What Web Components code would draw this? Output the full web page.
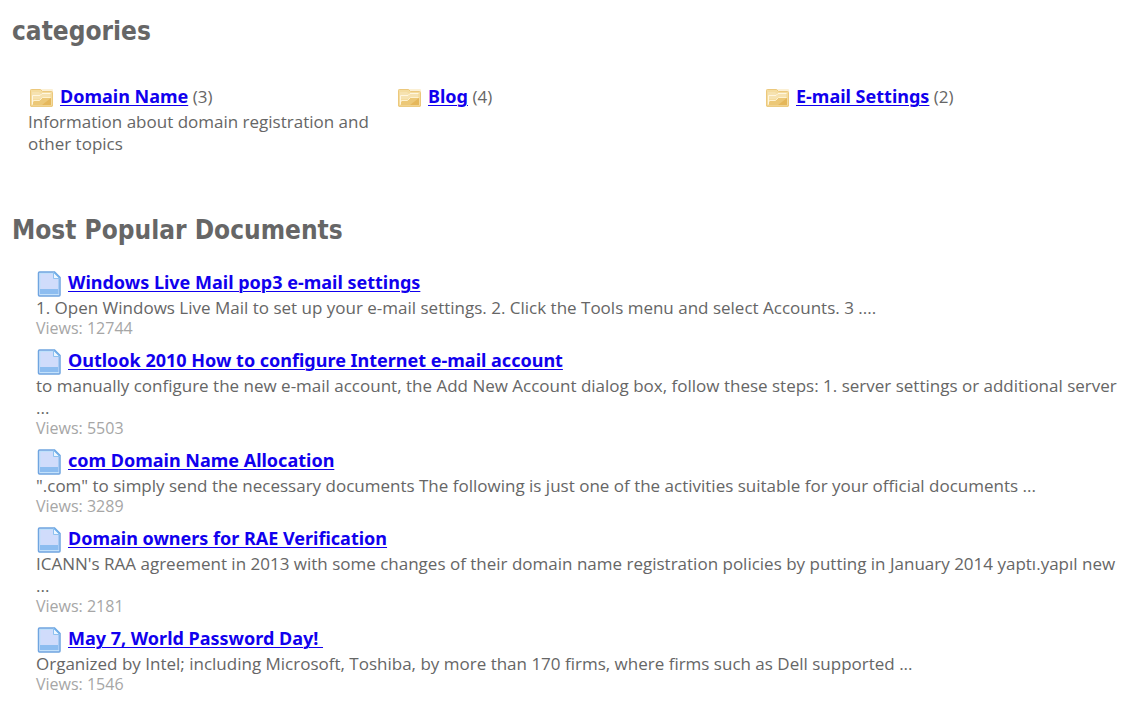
<!DOCTYPE html>
<html lang="en">
<head>
<meta charset="utf-8">
<title>Knowledge base</title>
<style>
body { margin: 0; background: #fff; }
</style>
</head>
<body>
<kb-page>
  <kb-section heading="categories">
    <kb-categories>
      <kb-category label="Domain Name" count="3">Information about domain registration and other topics</kb-category>
      <kb-category label="Blog" count="4"></kb-category>
      <kb-category label="E-mail Settings" count="2"></kb-category>
    </kb-categories>
  </kb-section>
  <kb-section heading="Most Popular Documents">
    <kb-documents>
      <kb-document label="Windows Live Mail pop3 e-mail settings" views="12744">1. Open Windows Live Mail to set up your e-mail settings. 2. Click the Tools menu and select Accounts. 3 ....</kb-document>
      <kb-document label="Outlook 2010 How to configure Internet e-mail account" views="5503">to manually configure the new e-mail account, the Add New Account dialog box, follow these steps: 1. server settings or additional server ...</kb-document>
      <kb-document label="com Domain Name Allocation" views="3289">".com" to simply send the necessary documents The following is just one of the activities suitable for your official documents ...</kb-document>
      <kb-document label="Domain owners for RAE Verification" views="2181">ICANN's RAA agreement in 2013 with some changes of their domain name registration policies by putting in January 2014 yaptı.yapıl new ...</kb-document>
      <kb-document label="May 7, World Password Day!&nbsp;" views="1546">Organized by Intel; including Microsoft, Toshiba, by more than 170 firms, where firms such as Dell supported ...</kb-document>
    </kb-documents>
  </kb-section>
</kb-page>
<script>
class KbElement extends HTMLElement {
  connectedCallback() {
    if (this.shadowRoot) return;
    this.attachShadow({ mode: 'open' }).innerHTML = this.markup();
    this.shadowRoot.querySelectorAll('[data-attr]').forEach(el => {
      el.textContent = this.getAttribute(el.dataset.attr);
    });
  }
}

customElements.define('kb-page', class extends KbElement {
  markup() {
    return `<style>
      :host { display: block; font: 17px/22px Tahoma, "Open Sans", sans-serif; color: #666; }
      main { display: flex; flex-direction: column; gap: 60px; padding: 16px 18px 12px 12px; }
    </style><main><slot></slot></main>`;
  }
});

customElements.define('kb-section', class extends KbElement {
  markup() {
    return `<style>
      :host { display: block; }
      h2 { margin: 0 0 24px; font: 700 26px/30px Tahoma, "DejaVu Sans Condensed", sans-serif; }
    </style><section><h2 data-attr="heading"></h2><slot></slot></section>`;
  }
});

customElements.define('kb-categories', class extends KbElement {
  markup() {
    return `<style>
      :host { display: grid; grid-template-columns: repeat(3, 1fr); padding-top: 15px; }
    </style><slot></slot>`;
  }
});

customElements.define('kb-documents', class extends KbElement {
  markup() {
    return `<style>
      :host { display: flex; flex-direction: column; gap: 12px; padding: 2px 0 0 24px; margin-right: -6px; }
    </style><slot></slot>`;
  }
});

const entryStyles = `
  .title { display: flex; align-items: flex-start; height: 26px; white-space: pre; }
  a { color: #10e; font: 700 18px/22px Tahoma, "Noto Sans", sans-serif; text-decoration: underline; text-decoration-thickness: 1px; text-underline-offset: 2px; }
  svg { flex: none; }
  p { margin: 0; }`;

customElements.define('kb-category', class extends KbElement {
  markup() {
    return `<style>${entryStyles}
      :host { display: block; padding: 0 8px 0 16px; }
      svg { margin: 3px 6px 0 1px; }
    </style>
    <div class="title"><svg width="25" height="20" viewBox="0 0 25 20" aria-hidden="true">
      <rect x="1" y="1" width="23" height="18" rx="1" fill="#fbf0d5"/>
      <path d="M1.5 18V2.5q0-1 1-1h9l2 2h9q1 0 1 1V18z" fill="#f4dc9f" stroke="#ecc87c"/>
      <path d="M3 4h7l2 2h9v3h-7l-2 2H3z" fill="#f6e2b0"/>
      <path d="M3.5 16.500V7.500h7.500l2-2h8.500" fill="none" stroke="#fff6df"/>
      <path d="M4 17v-4h6l3-3h9v7z" fill="#ecc877"/>
      <path d="M13 17l9-7v7z" fill="#e5b75a"/>
      <path d="M4.500 13.500V12.500h6l3-3h8" fill="none" stroke="#fff2cf"/>
      <path d="M2 18.500h21" stroke="#eccb80"/>
    </svg><div><a href="#" data-attr="label"></a> (<span data-attr="count"></span>)</div></div>
    <p><slot></slot></p>`;
  }
});

customElements.define('kb-document', class extends KbElement {
  markup() {
    return `<style>${entryStyles}
      :host { display: block; }
      svg { margin: 0 6px 0 1px; }
      .views { font-size: 16px; line-height: 18px; color: #a6a6a6; }
    </style>
    <div class="title"><svg width="25" height="26" viewBox="0 0 25 26" aria-hidden="true">
      <path d="M2.500 1h15L23 6.500V24q0 1-1 1H2.500q-1 0-1-1V2q0-1 1-1z" fill="#d0dcfb" stroke="#6fa5e0" stroke-width="1.500"/>
      <path d="M3 23.500V2.500h14" fill="none" stroke="#bfe0fb"/>
      <path d="M21.500 8v15.500" stroke="#a9cdf5"/>
      <path d="M3 18h18v5H3z" fill="#8dbdf0"/>
      <path d="M3 23.500h19" stroke="#c4e2fb"/>
      <path d="M16.500 1.500v6h6z" fill="#edf7ff" stroke="#8fc1f0"/>
      <path d="M18 0h7v7z" fill="#fff"/>
      <path d="M17.500 1L23 6.500" stroke="#74afe8" stroke-width="1.500"/>
    </svg><a href="#" data-attr="label"></a></div>
    <p><slot></slot></p>
    <p class="views">Views: <span data-attr="views"></span></p>`;
  }
});
</script>
</body>
</html>
